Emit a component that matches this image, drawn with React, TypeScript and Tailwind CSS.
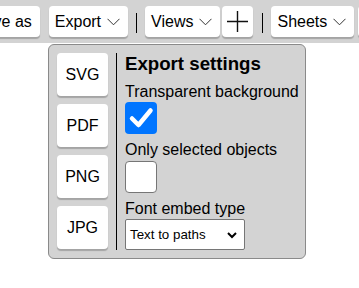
import React from "react";

const font = { fontFamily: '"Liberation Sans", Arial, sans-serif' };

function Chevron() {
  return (
    <svg width="13" height="8" viewBox="0 0 13 8" className="ml-1.5 shrink-0">
      <path d="M0.5 0.8 L6.5 6.8 L12.5 0.8" fill="none" stroke="#333" strokeWidth="1" />
    </svg>
  );
}

function ToolButton({ children, className = "" }: { children: React.ReactNode; className?: string }) {
  return (
    <div
      className={
        "flex h-[31px] shrink-0 items-center rounded-[4px] bg-white pl-1.5 pr-2 text-[16px] leading-none text-black shadow-[0_2px_1px_rgba(0,0,0,0.22)] " +
        className
      }
    >
      {children}
    </div>
  );
}

function Sep({ className = "" }: { className?: string }) {
  return <div className={"h-5 w-px shrink-0 bg-black " + className} />;
}

function FormatButton({ label }: { label: string }) {
  return (
    <div className="flex h-[43px] w-[51px] items-center justify-center rounded-[4px] bg-white text-[16px] text-black shadow-[0_2px_1px_rgba(0,0,0,0.22)]">
      {label}
    </div>
  );
}

export default function App() {
  return (
    <div className="relative h-[288px] w-[359px] overflow-hidden bg-white" style={font}>
      <div className="flex h-[43px] items-start bg-[#d3d3d3] pt-[6px]">
        <ToolButton className="-ml-8">Save as</ToolButton>
        <ToolButton className="ml-[9px]">
          Export
          <Chevron />
        </ToolButton>
        <Sep className="ml-2 mt-[7px]" />
        <ToolButton className="ml-2">
          Views
          <Chevron />
        </ToolButton>
        <ToolButton className="ml-[2px] w-[31px] justify-center !px-0">
          <svg width="21" height="21" viewBox="0 0 21 21">
            <path d="M10.5 0 V21 M0 10.5 H21" stroke="#111" strokeWidth="1.4" />
          </svg>
        </ToolButton>
        <Sep className="ml-[9px] mt-[7px]" />
        <ToolButton className="ml-2">
          Sheets
          <Chevron />
        </ToolButton>
        <ToolButton className="ml-1 w-10">&nbsp;</ToolButton>
      </div>

      <div className="absolute left-[48px] top-[44px] flex h-[215px] w-[258px] rounded-[6px] border border-[#8a8a8a] bg-[#d3d3d3] py-2 pl-2 text-black">
        <div className="flex flex-col gap-2">
          <FormatButton label="SVG" />
          <FormatButton label="PDF" />
          <FormatButton label="PNG" />
          <FormatButton label="JPG" />
        </div>
        <div className="ml-2 w-px bg-black" />
        <div className="ml-2 flex flex-col items-start">
          <div className="text-[18.67px] font-bold leading-[21px]">Export settings</div>
          <div className="mt-[9px] text-[16px] leading-[18px]">Transparent background</div>
          <div className="mt-px flex h-8 w-8 items-center justify-center rounded-[4px] bg-[#0075ff]">
            <svg width="32" height="32" viewBox="0 0 32 32">
              <path d="M7 16.5 L13.5 23 L25.5 8.5" fill="none" stroke="white" strokeWidth="4.5" strokeLinecap="round" strokeLinejoin="round" />
            </svg>
          </div>
          <div className="mt-[7px] text-[16px] leading-[18px]">Only selected objects</div>
          <div className="mt-[2px] h-8 w-8 rounded-[4px] border border-[#767676] bg-white" />
          <div className="mt-[7px] text-[16px] leading-[18px]">Font embed type</div>
          <div className="relative mt-px flex h-[31px] w-[120px] items-center rounded-[2px] border border-[#767676] bg-white pl-1 text-[13.33px]">
            Text to paths
            <svg width="10" height="7" viewBox="0 0 10 7" className="absolute right-[7px] top-[12px]">
              <path d="M1 1 L5 5 L9 1" fill="none" stroke="black" strokeWidth="2" />
            </svg>
          </div>
        </div>
      </div>
    </div>
  );
}
